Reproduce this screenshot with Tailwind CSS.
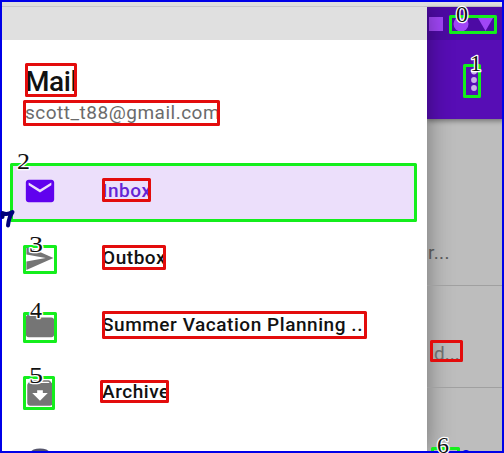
<!DOCTYPE html>
<html lang="en">
<head>
<meta charset="utf-8">
<title>Mail</title>
<script src="https://cdn.jsdelivr.net/npm/@tailwindcss/browser@4"></script>
</head>
<body class="font-['Roboto',sans-serif]">
<div class="relative flex h-[453px] w-[504px] flex-col overflow-hidden bg-white">
  <div class="h-[7px] shrink-0 border-b border-[#c8c8c8] bg-[#dfdfdf]"></div>
  <div class="flex min-h-0 flex-1">
    <!-- Navigation drawer -->
    <aside class="relative z-10 w-[427px] shrink-0 bg-white shadow-[0_0_24px_rgba(0,0,0,0.4)] [clip-path:inset(0_-40px_0_0)]">
      <div class="h-[33px] bg-[#e0e0e0]"></div>
      <header class="flex flex-col pt-[25px] pl-[25px]">
        <h1 class="h-[34px] w-max text-[28px] leading-[34px] font-medium tracking-[-0.4px] text-[#111]">Mail</h1>
        <p class="mt-[1px] h-[26px] w-max text-[19px] leading-[26px] tracking-[0.5px] text-[#6b6b6b]">scott_t88@gmail.com</p>
      </header>
      <nav class="mt-[38px] flex flex-col gap-[10px] pl-[11px] text-[19px] font-medium tracking-[0.55px] text-[#111]">
        <a class="flex h-[57px] w-[405px] items-center bg-[#ecdffb] pl-[12px] text-[#6424d4]">
          <svg class="-mt-[3px] size-[34px] shrink-0" viewBox="0 0 24 24" fill="#6002ee"><path d="M20 4H4c-1.1 0-2 .9-2 2v12c0 1.1.9 2 2 2h16c1.1 0 2-.9 2-2V6c0-1.1-.9-2-2-2zm0 4-8 5-8-5V6l8 5 8-5v2z"/></svg>
          <span class="-mt-[3px] ml-[45px]">Inbox</span>
        </a>
        <a class="flex h-[57px] items-center pl-[12px]">
          <svg class="-mt-[3px] size-[34px] shrink-0" viewBox="0 0 24 24" fill="#757575"><path d="M2.400 20.500 21.500 12 2.400 3.500v6.100L16 12 2.400 14.400z"/></svg>
          <span class="-mt-[2px] ml-[45px]">Outbox</span>
        </a>
        <a class="flex h-[57px] items-center pl-[12px]">
          <svg class="-mt-[2px] size-[34px] shrink-0" viewBox="0 0 24 24" fill="#757575"><path d="M10 4H4c-1.100 0-2 .9-2 2v12c0 1.100.9 2 2 2h16c1.100 0 2-.9 2-2V8c0-1.100-.9-2-2-2h-8l-2-2z"/></svg>
          <span class="-mt-[2px] ml-[45px]">Summer Vacation Planning ..</span>
        </a>
        <a class="flex h-[57px] items-center pl-[12px]">
          <svg class="-mt-[2px] size-[34px] shrink-0" viewBox="0 0 24 24" fill="#757575"><path d="M20.540 5.230l-1.390-1.680C18.880 3.210 18.470 3 18 3H6c-.47 0-.88.21-1.160.55L3.460 5.230C3.170 5.570 3 6.020 3 6.500V19c0 1.100.9 2 2 2h14c1.100 0 2-.9 2-2V6.500c0-.48-.17-.93-.46-1.270zM12 17.500L6.500 12H10v-2h4v2h3.500L12 17.500zM5.120 5l.81-1h12l.94 1H5.120z"/></svg>
          <span class="-mt-[2px] ml-[45px]">Archive</span>
        </a>
      </nav>
    </aside>
    <!-- Scrimmed inbox -->
    <main class="flex min-w-0 flex-1 flex-col bg-[#bdbdbd]">
      <div class="flex h-[112px] shrink-0 flex-col bg-[#570db5] shadow-[0_2px_5px_rgba(0,0,0,0.4)]">
        <div class="h-[33px] bg-[#4d0aa4]">
          <svg class="h-[33px] w-[77px]" viewBox="427 7 77 33" fill="#a046f6"><path d="M429 17h14v14h-14z"/><circle cx="461" cy="24" r="7.500"/><path d="M478 18h15l-7.500 13z"/></svg>
        </div>
        <svg class="h-[79px] w-[77px]" viewBox="427 40 77 79" fill="#c9b1e9"><circle cx="474" cy="71.500" r="2.900"/><circle cx="474" cy="80" r="2.900"/><circle cx="474" cy="88" r="2.900"/></svg>
      </div>
      <div class="relative z-20 flex h-[167px] items-end border-b border-[#a0a0a0] pb-[19px] pl-px text-[19px] leading-[26px] tracking-[0.4px] text-[#555]">r...</div>
      <div class="relative z-20 flex h-[102px] items-end border-b border-[#a0a0a0] pb-[20px] pl-[7px] text-[19px] leading-[26px] text-[#6c6c6c]">d...</div>
    </main>
  </div>

  <!-- Detection overlay -->
  <svg class="absolute inset-0 z-30" width="504" height="453" viewBox="0 0 504 453" fill="none">
    <ellipse cx="40" cy="452" rx="9" ry="3.500" fill="#55556b"/>
    <g stroke="#e30c0c" stroke-width="3" stroke-linejoin="round">
      <path d="M26.500 64.500h49v31h-49zM24.500 101.500h194v23h-194zM103.500 179.500h46v21h-46zM103.500 246.500h61v22h-61zM103.500 312.500h262v25h-262zM101.500 381.500h66v20h-66zM431.500 341.500h30v19h-30z"/>
    </g>
    <g stroke="#14ee1c" stroke-width="3" stroke-linejoin="round">
      <path d="M450.500 16.500h45v16h-45zM464.500 65.500h15v31h-15zM11.500 164.500h404v56h-404zM24.500 246.500h31v26h-31zM24.500 313.500h31v28h-31zM24.500 377.500h29v31h-29zM432.500 448.500h26v8h-26z"/>
    </g>
    <path d="M1 1H503V452H1z" stroke="#0000e8" stroke-width="2"/>
    <path d="M463 451q3-2 6 0z" fill="#0000e8"/>
    <g class="font-['Liberation_Serif',serif] text-[23px]" fill="#111" stroke="#fff" stroke-width="2.500" paint-order="stroke" stroke-linejoin="round">
      <text x="17" y="169" textLength="13" lengthAdjust="spacingAndGlyphs">2</text>
      <text x="29" y="252" textLength="14" lengthAdjust="spacingAndGlyphs">3</text>
      <text x="30" y="318" textLength="12" lengthAdjust="spacingAndGlyphs">4</text>
      <text x="29" y="383" textLength="14" lengthAdjust="spacingAndGlyphs">5</text>
      <text x="456" y="22" textLength="12" lengthAdjust="spacingAndGlyphs">0</text>
      <text x="470" y="71">1</text>
      <text x="437" y="453" textLength="12" lengthAdjust="spacingAndGlyphs">6</text>
    </g>
    <path d="M2.500 217V213Q7 215.500 12.500 212Q9 217 8 225.500" stroke="#00007c" stroke-width="4" stroke-linecap="round" stroke-linejoin="round"/>
  </svg>
</div>
</body>
</html>
